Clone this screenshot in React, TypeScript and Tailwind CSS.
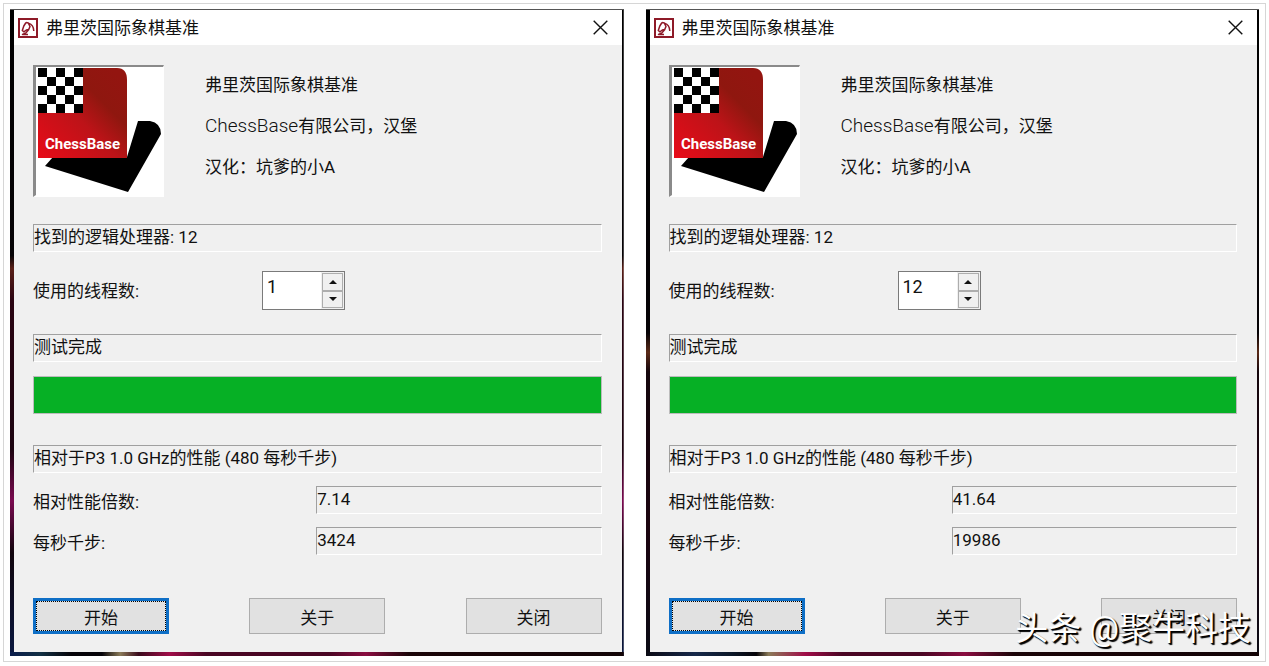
import React from "react";

type Result = {
  id: string;
  threads: string;
  ratio: string;
  knps: string;
  frame: string;
};

const results: Result[] = [
  {
    id: "single",
    threads: "1",
    ratio: "7.14",
    knps: "3424",
    frame:
      "bg-[linear-gradient(90deg,#0a1c4c,#123044_5%,#050308_10%,#050308_15%,#8a7a58_18%,#3a0a1c_21%,#a00c48_26%,#4a0624_32%,#4a0624_52%,#8a0c40_58%,#1a0508_65%,#120406),linear-gradient(180deg,#000,#060306_38%,#5a2018_40%,#2a0412_45%,#1c0410_68%,#7a0a50_76%,#10040c_84%,#0a1840)]",
  },
  {
    id: "multi",
    threads: "12",
    ratio: "41.64",
    knps: "19986",
    frame:
      "bg-[linear-gradient(90deg,#0a0a14,#16284a_8%,#0c1828_14%,#050308_18%,#8a7a58_20%,#a00c48_26%,#4a0624_32%,#4a0624_45%,#8a0c40_52%,#1a0508_60%,#120406),linear-gradient(180deg,#000,#060306_50%,#5a2a18_53%,#14060c_56%,#1c0410_80%,#0a0a14)]",
  },
];

const sunken =
  "border border-t-[#a0a0a0] border-l-[#a0a0a0] border-r-white border-b-white";

function KnightIcon() {
  return (
    <svg viewBox="0 0 20 20" className="size-5 shrink-0" aria-hidden="true">
      <rect x="1" y="1" width="18" height="18" fill="#fff" stroke="#8e1a28" strokeWidth="2" />
      <path
        d="M8 4.500 5.800 8 4.300 12.500l1.600 1.300 2.400-1.800 2.500-.6-2.800 3.400-3.500 1.700h5.500M8 4.500l2.500.6c3.300 1 5.200 3.600 5.300 8M10.500 5.500l1.500 3-1.200 2.800"
        fill="none"
        stroke="#8e1a28"
        strokeWidth="1.500"
        strokeLinejoin="round"
      />
    </svg>
  );
}

function CloseIcon() {
  return (
    <svg viewBox="0 0 15 15" className="size-[15px]" aria-hidden="true">
      <path d="M.7.7l13.600 13.600M14.300.7.7 14.300" stroke="#111" strokeWidth="1.400" />
    </svg>
  );
}

function ChessBaseLogo({ id }: { id: string }) {
  const cells: React.ReactNode[] = [];
  for (let row = 0; row < 5; row++) {
    for (let col = 0; col < 5; col++) {
      if ((row + col) % 2 === 0) {
        cells.push(
          <rect key={`${row}-${col}`} x={2 + col * 9} y={1 + row * 9} width="9" height="9" fill="#000" />
        );
      }
    }
  }
  return (
    <svg viewBox="0 0 126 127" className="h-[127px] w-[126px]" role="img" aria-label="ChessBase">
      <defs>
        <linearGradient id={`red-${id}`} x1="0" y1="1" x2="0.9" y2="0.1">
          <stop offset="0" stopColor="#e80b18" />
          <stop offset="0.5" stopColor="#bd1318" />
          <stop offset="0.75" stopColor="#8f170f" />
          <stop offset="1" stopColor="#931510" />
        </linearGradient>
      </defs>
      <path d="M9 99 17 90H91L102 54h12q11 2 11 13L92 125z" fill="#000" />
      <path d="M2 1h79q10 0 10 12v78H2z" fill={`url(#red-${id})`} />
      <rect x="2" y="1" width="45" height="45" fill="#fff" />
      {cells}
      <text x="9" y="82" fill="#fff" fontSize="15" fontWeight="700" className="font-['Roboto',sans-serif]">
        ChessBase
      </text>
    </svg>
  );
}

function SpinArrow({ down = false }: { down?: boolean }) {
  return (
    <svg viewBox="0 0 8 4" className="h-1 w-2" aria-hidden="true">
      <path d={down ? "M0 0h8L4 4z" : "M0 4h8L4 0z"} fill="#111" />
    </svg>
  );
}

function DialogButton({ children, focused = false }: { children: string; focused?: boolean }) {
  return (
    <button
      type="button"
      className={
        focused
          ? "h-9 w-[136px] border-[3px] border-[#0f6fc6] bg-[#e1e1e1]"
          : "h-9 w-[136px] border border-[#adadad] bg-[#e1e1e1]"
      }
    >
      <span
        className={
          focused
            ? "flex h-full items-center justify-center border border-dotted border-black pt-1"
            : "flex h-full items-center justify-center pt-1"
        }
      >
        {children}
      </span>
    </button>
  );
}

function BenchmarkWindow({ result }: { result: Result }) {
  return (
    <section
      className={`flex-1 border-t border-[#555] bg-[length:100%_4px,100%_100%] bg-[position:bottom,top] bg-no-repeat pr-[2px] pb-1 pl-1 ${result.frame}`}
    >
      <header className="flex h-[35px] items-center bg-white pr-[10px] pl-1">
        <KnightIcon />
        <h1 className="ml-2 flex-1">弗里茨国际象棋基准</h1>
        <button type="button" aria-label="关闭窗口" className="p-1">
          <CloseIcon />
        </button>
      </header>

      <div className="flex flex-col bg-[#f0f0f0] pt-5 pr-5 pb-[18px] pl-[19px]">
        <div className="flex">
          <div className="h-[132px] w-[131px] border-t-2 border-r border-b-2 border-l-[3px] border-t-[#8a8a8a] border-r-white border-b-white border-l-[#8a8a8a] bg-white">
            <ChessBaseLogo id={result.id} />
          </div>
          <div className="ml-[41px] flex flex-col gap-[17px] pt-2">
            <p>弗里茨国际象棋基准</p>
            <p>
              <span className="text-[19px] font-light">ChessBase</span>有限公司，汉堡
            </p>
            <p>汉化：坑爹的小A</p>
          </div>
        </div>

        <p className={`mt-[27px] h-7 ${sunken}`}>找到的逻辑处理器: 12</p>

        <div className="mt-[19px] flex">
          <label htmlFor={`threads-${result.id}`} className="w-[229px] pt-2">
            使用的线程数:
          </label>
          <div className="flex h-[39px] w-[83px] border border-[#7a7a7a] bg-white">
            <input
              id={`threads-${result.id}`}
              defaultValue={result.threads}
              className="h-7 w-[58px] min-w-0 pl-1 text-[18px] outline-none"
            />
            <div className="flex flex-1 flex-col bg-[#f0f0f0] p-px">
              <button type="button" aria-label="增加" className="flex flex-1 items-center justify-center border border-[#adadad]">
                <SpinArrow />
              </button>
              <button type="button" aria-label="减少" className="flex flex-1 items-center justify-center border border-[#adadad]">
                <SpinArrow down />
              </button>
            </div>
          </div>
        </div>

        <p className={`mt-6 h-7 ${sunken}`}>测试完成</p>
        <div
          role="progressbar"
          aria-valuenow={100}
          aria-label="测试进度"
          className="mt-[14px] h-[38px] border border-[#bcbcbc] bg-[#06b025]"
        />

        <p className={`mt-[31px] h-7 ${sunken}`}>相对于P3 1.0 GHz的性能 (480 每秒千步)</p>
        <dl>
          <div className="mt-[13px] flex">
            <dt className="flex-1 pt-1">相对性能倍数:</dt>
            <dd className={`h-7 flex-1 ${sunken}`}>{result.ratio}</dd>
          </div>
          <div className="mt-[13px] flex">
            <dt className="flex-1 pt-1">每秒千步:</dt>
            <dd className={`h-7 flex-1 ${sunken}`}>{result.knps}</dd>
          </div>
        </dl>

        <div className="mt-[43px] flex justify-between">
          <DialogButton focused>开始</DialogButton>
          <DialogButton>关于</DialogButton>
          <DialogButton>关闭</DialogButton>
        </div>
      </div>
    </section>
  );
}

export default function App() {
  return (
    <main className="bg-white p-[3px] font-['Roboto','Noto_Sans_CJK_SC',sans-serif] text-[17px] leading-6 text-[#111]">
      <div className="relative flex gap-[22px] border border-[#d6d6d6] px-[6px] py-[5px]">
        {results.map((result) => (
          <BenchmarkWindow key={result.id} result={result} />
        ))}
        <p className="absolute right-[14px] bottom-3 text-[33px] leading-10 text-white [text-shadow:1px_1px_1px_#000,2px_2px_1px_#000]">
          头条 @聚牛科技
        </p>
      </div>
    </main>
  );
}
